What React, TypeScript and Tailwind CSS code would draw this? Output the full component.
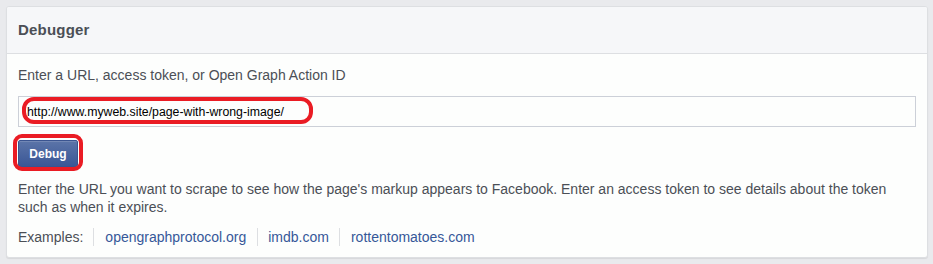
import React from "react";

export default function App() {
  const font = { fontFamily: '"Liberation Sans", Arial, Helvetica, sans-serif' };
  return (
    <div className="w-[933px] h-[264px] bg-[#e9eaed] pt-[6px] pl-[6px]" style={font}>
      <div className="w-[922px] h-[252px] bg-[#fdfefd] border border-[#dddfe2] rounded-[3px] shadow-[0_1px_1px_rgba(0,0,0,0.08)] overflow-hidden">
        <div className="h-[47px] bg-[#f6f7f9] border-b border-[#dddfe2] flex items-center px-[11px]">
          <span className="text-[15px] font-bold text-[#4b4f56] leading-[18px] tracking-[0.2px]">Debugger</span>
        </div>
        <div className="px-[11px] pt-[12px]">
          <div className="text-[14px] leading-[18px] text-[#4b4f56]">
            Enter a URL, access token, or Open Graph Action ID
          </div>
          <div className="relative mt-[12px] w-[898px] h-[31px] border border-[#ccd0d8] bg-[#fdfefd] flex items-center pl-[8px]">
            <span className="text-[12.3px] text-black leading-[14px]">http://www.myweb.site/page-with-wrong-image/</span>
            <div className="absolute left-[3px] top-[0px] w-[291px] h-[27px] border-[4px] border-[#ea1c24] rounded-[12px]"></div>
          </div>
          <div className="relative mt-[13px] w-[60px] h-[27px]">
            <button className="w-[60px] h-[27px] bg-gradient-to-b from-[#5b74a8] to-[#3b5796] border border-[#3a5490] rounded-[2px] text-white text-[12px] font-bold flex items-center justify-center shadow-[inset_0_1px_0_rgba(255,255,255,0.15)]">
              Debug
            </button>
            <div className="absolute left-[-5px] top-[-6px] w-[70px] h-[37px] border-[4px] border-[#ea1c24] rounded-[9px]"></div>
          </div>
          <p className="mt-[13px] text-[14px] leading-[18px] text-[#4b4f56] w-[898px]">
            Enter the URL you want to scrape to see how the page's markup appears to Facebook. Enter an access token to see details about the token such as when it expires.
          </p>
          <div className="mt-[12px] flex items-center text-[14px] leading-[18px]">
            <span className="text-[#4b4f56] pr-[10px]">Examples:</span>
            <span className="w-px h-[18px] bg-[#dddfe2]"></span>
            <a className="text-[#365899] px-[11px]">opengraphprotocol.org</a>
            <span className="w-px h-[18px] bg-[#dddfe2]"></span>
            <a className="text-[#365899] px-[10px]">imdb.com</a>
            <span className="w-px h-[18px] bg-[#dddfe2]"></span>
            <a className="text-[#365899] px-[11px]">rottentomatoes.com</a>
          </div>
        </div>
      </div>
    </div>
  );
}
